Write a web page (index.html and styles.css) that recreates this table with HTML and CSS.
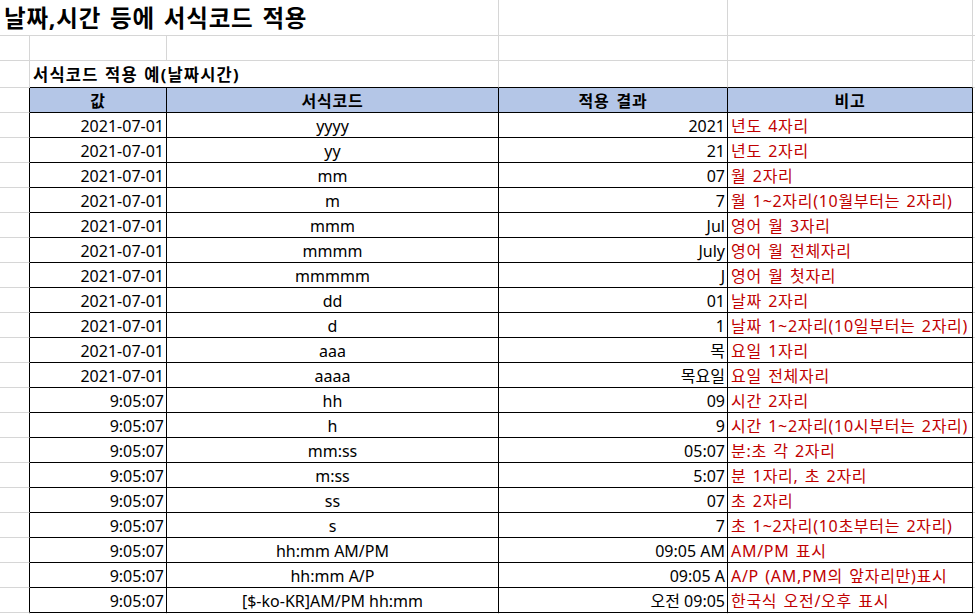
FILE: index.html
```html
<!DOCTYPE html>
<html lang="ko">
<head>
<meta charset="utf-8">
<title>날짜,시간 등에 서식코드 적용</title>
<link rel="stylesheet" href="styles.css">
</head>
<body>
<div class="sheet">
  <!-- row 1 -->
  <div class="c title span3">날짜,시간 등에 서식코드 적용</div>
  <div class="c"></div><div class="c"></div><div class="c"></div>
  <!-- row 2 -->
  <div class="c"></div><div class="c"></div><div class="c"></div><div class="c"></div><div class="c"></div><div class="c"></div>
  <!-- row 3 -->
  <div class="c r3"></div>
  <div class="c sub span2 tb">서식코드 적용 예(날짜시간)</div>
  <div class="c tb"></div><div class="c tb"></div><div class="c r3"></div>
  <!-- header -->
  <div class="c edge"></div>
  <div class="c t h">값</div>
  <div class="c t h">서식코드</div>
  <div class="c t h">적용 결과</div>
  <div class="c t h">비고</div>
  <div class="c"></div>

  <div class="c edge"></div><div class="c t num">2021-07-01</div><div class="c t mid">yyyy</div><div class="c t num">2021</div><div class="c t note">년도 4자리</div><div class="c"></div>
  <div class="c edge"></div><div class="c t num">2021-07-01</div><div class="c t mid">yy</div><div class="c t num">21</div><div class="c t note">년도 2자리</div><div class="c"></div>
  <div class="c edge"></div><div class="c t num">2021-07-01</div><div class="c t mid">mm</div><div class="c t num">07</div><div class="c t note">월 2자리</div><div class="c"></div>
  <div class="c edge"></div><div class="c t num">2021-07-01</div><div class="c t mid">m</div><div class="c t num">7</div><div class="c t note">월 1~2자리(10월부터는 2자리)</div><div class="c"></div>
  <div class="c edge"></div><div class="c t num">2021-07-01</div><div class="c t mid">mmm</div><div class="c t num">Jul</div><div class="c t note">영어 월 3자리</div><div class="c"></div>
  <div class="c edge"></div><div class="c t num">2021-07-01</div><div class="c t mid">mmmm</div><div class="c t num">July</div><div class="c t note">영어 월 전체자리</div><div class="c"></div>
  <div class="c edge"></div><div class="c t num">2021-07-01</div><div class="c t mid">mmmmm</div><div class="c t num">J</div><div class="c t note">영어 월 첫자리</div><div class="c"></div>
  <div class="c edge"></div><div class="c t num">2021-07-01</div><div class="c t mid">dd</div><div class="c t num">01</div><div class="c t note">날짜 2자리</div><div class="c"></div>
  <div class="c edge"></div><div class="c t num">2021-07-01</div><div class="c t mid">d</div><div class="c t num">1</div><div class="c t note">날짜 1~2자리(10일부터는 2자리)</div><div class="c"></div>
  <div class="c edge"></div><div class="c t num">2021-07-01</div><div class="c t mid">aaa</div><div class="c t num">목</div><div class="c t note">요일 1자리</div><div class="c"></div>
  <div class="c edge"></div><div class="c t num">2021-07-01</div><div class="c t mid">aaaa</div><div class="c t num">목요일</div><div class="c t note">요일 전체자리</div><div class="c"></div>
  <div class="c edge"></div><div class="c t num">9:05:07</div><div class="c t mid">hh</div><div class="c t num">09</div><div class="c t note">시간 2자리</div><div class="c"></div>
  <div class="c edge"></div><div class="c t num">9:05:07</div><div class="c t mid">h</div><div class="c t num">9</div><div class="c t note">시간 1~2자리(10시부터는 2자리)</div><div class="c"></div>
  <div class="c edge"></div><div class="c t num">9:05:07</div><div class="c t mid">mm:ss</div><div class="c t num">05:07</div><div class="c t note">분:초 각 2자리</div><div class="c"></div>
  <div class="c edge"></div><div class="c t num">9:05:07</div><div class="c t mid">m:ss</div><div class="c t num">5:07</div><div class="c t note">분 1자리, 초 2자리</div><div class="c"></div>
  <div class="c edge"></div><div class="c t num">9:05:07</div><div class="c t mid">ss</div><div class="c t num">07</div><div class="c t note">초 2자리</div><div class="c"></div>
  <div class="c edge"></div><div class="c t num">9:05:07</div><div class="c t mid">s</div><div class="c t num">7</div><div class="c t note">초 1~2자리(10초부터는 2자리)</div><div class="c"></div>
  <div class="c edge"></div><div class="c t num">9:05:07</div><div class="c t mid">hh:mm AM/PM</div><div class="c t num">09:05 AM</div><div class="c t note">AM/PM 표시</div><div class="c"></div>
  <div class="c edge"></div><div class="c t num">9:05:07</div><div class="c t mid">hh:mm A/P</div><div class="c t num">09:05 A</div><div class="c t note">A/P (AM,PM의 앞자리만)표시</div><div class="c"></div>
  <div class="c edge"></div><div class="c t num">9:05:07</div><div class="c t mid">[$-ko-KR]AM/PM hh:mm</div><div class="c t num">오전 09:05</div><div class="c t note">한국식 오전/오후 표시</div><div class="c"></div>
  <!-- trailing row -->
  <div class="c"></div><div class="c"></div><div class="c"></div><div class="c"></div><div class="c"></div><div class="c"></div>
</div>
</body>
</html>
```

FILE: styles.css
```css
html, body {
  margin: 0;
  padding: 0;
  background: #ffffff;
}

body {
  font-family: "Noto Sans", "Noto Sans CJK KR", sans-serif;
  font-size: 16px;
  color: #000000;
  overflow: hidden;
}

.sheet {
  display: grid;
  grid-template-columns: 30px 137px 332px 229px 245px 20px;
  grid-template-rows: 36px 25px 27px repeat(22, 25px);
  width: 993px;
}

.c {
  box-sizing: border-box;
  border-right: 1px solid #d6d6d6;
  border-bottom: 1px solid #d6d6d6;
  display: flex;
  align-items: center;
  white-space: nowrap;
  overflow: visible;
  line-height: 1;
  min-width: 0;
}

.span3 { grid-column: span 3; }
.span2 { grid-column: span 2; }

.title {
  font-size: 23.5px;
  font-weight: 700;
  letter-spacing: 0.8px;
  word-spacing: 2px;
  padding-left: 4px;
  padding-top: 2px;
}

.sub {
  font-weight: 700;
  font-size: 16.5px;
  letter-spacing: 1.2px;
  word-spacing: 1px;
  padding-left: 3px;
  padding-top: 3px;
}

.tb {
  border-bottom-color: #000000;
}

.edge {
  border-right-color: #000000;
}

.t {
  border-right-color: #000000;
  border-bottom-color: #000000;
  padding-top: 1px;
}

.h {
  background: #b4c6e7;
  font-weight: 700;
  letter-spacing: 0.8px;
  word-spacing: 2px;
  justify-content: center;
}

.num {
  justify-content: flex-end;
  padding-right: 2px;
}

.mid {
  justify-content: center;
}

.note {
  color: #c00000;
  letter-spacing: 0.7px;
  word-spacing: 1.5px;
  padding-left: 3px;
}
```
